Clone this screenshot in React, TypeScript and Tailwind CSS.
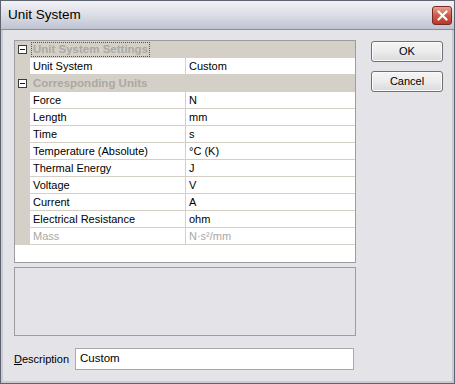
import React from "react";

type Row = { name: string; value: string; disabled?: boolean };

const settings: Row[] = [{ name: "Unit System", value: "Custom" }];

const units: Row[] = [
  { name: "Force", value: "N" },
  { name: "Length", value: "mm" },
  { name: "Time", value: "s" },
  { name: "Temperature (Absolute)", value: "°C (K)" },
  { name: "Thermal Energy", value: "J" },
  { name: "Voltage", value: "V" },
  { name: "Current", value: "A" },
  { name: "Electrical Resistance", value: "ohm" },
  { name: "Mass", value: "N·s²/mm", disabled: true },
];

function MinusBox() {
  return (
    <div className="w-[9px] h-[9px] border border-[#3c3c3c] bg-white flex items-center justify-center">
      <div className="w-[5px] h-px bg-[#1a1a1a]" />
    </div>
  );
}

function Category({ label, focused }: { label: string; focused?: boolean }) {
  return (
    <div className="flex h-[17px] bg-[#d4d0c8] items-center">
      <div className="w-[15px] flex justify-center">
        <MinusBox />
      </div>
      <span
        className={`ml-[2px] px-[1px] font-bold text-[11.5px] text-[#aaa9a2] leading-[13px] ${
          focused ? "outline-1 outline-dotted outline-[#555]" : ""
        }`}
      >
        {label}
      </span>
    </div>
  );
}

function PropRow({ row }: { row: Row }) {
  const color = row.disabled ? "text-[#a8a8a8]" : "text-black";
  return (
    <div className="flex h-[17px]">
      <div className="w-[15px] bg-[#d4d0c8]" />
      <div className={`w-[156px] border-r border-b border-[#d4d0c8] bg-white pl-[3px] leading-[16px] ${color}`}>
        {row.name}
      </div>
      <div className={`flex-1 border-b border-[#d4d0c8] bg-white pl-[3px] leading-[16px] ${color}`}>
        {row.value}
      </div>
    </div>
  );
}

function WinButton({ children }: { children: React.ReactNode }) {
  return (
    <button
      type="button"
      className="w-[72px] h-[21px] rounded-[3px] border border-[#707070] bg-gradient-to-b from-[#f4f4f4] via-[#ececec] to-[#d9d9d9] text-[11px] text-black shadow-[inset_0_0_0_1px_#fbfbfb]"
    >
      {children}
    </button>
  );
}

export default function App() {
  return (
    <div className="w-[455px] h-[384px] flex flex-col bg-[#e3e3e8] border border-[#5f6370] font-['Liberation_Sans',Arial,sans-serif] text-[11px] overflow-hidden">
      <div className="h-[29px] flex items-center justify-between pl-[7px] pr-[2px] bg-gradient-to-b from-[#f2f2f6] via-[#dcdee6] to-[#bfc3d0] border-b border-[#8a8e9c]">
        <span className="text-[13.5px] text-black">Unit System</span>
        <div className="w-[20px] h-[19px] rounded-[3px] border border-[#7a2a26] bg-gradient-to-b from-[#e8a393] via-[#cf5a46] to-[#b8382a] flex items-center justify-center">
          <svg width="11" height="11" viewBox="0 0 11 11">
            <path d="M1.5 1.5 L9.5 9.5 M9.5 1.5 L1.5 9.5" stroke="white" strokeWidth="2.2" strokeLinecap="round" />
          </svg>
        </div>
      </div>
      <div className="flex-1 flex border-x-2 border-b-2 border-[#c9cbd4] pl-[11px] pt-[10px]">
        <div className="w-[342px] flex flex-col">
          <div className="h-[223px] border border-[#9d9d9d] bg-white flex flex-col">
            <Category label="Unit System Settings" focused />
            {settings.map((r) => (
              <PropRow key={r.name} row={r} />
            ))}
            <Category label="Corresponding Units" />
            {units.map((r) => (
              <PropRow key={r.name} row={r} />
            ))}
          </div>
          <div className="h-[69px] mt-[4px] border border-[#9d9d9d] bg-[#e3e3e8]" />
          <div className="mt-[12px] flex items-center">
            <span className="w-[61px] text-black text-[11px]">
              <span className="underline">D</span>escription
            </span>
            <div className="w-[279px] h-[22px] border border-[#a9a9a9] bg-white pl-[4px] flex items-center text-black text-[11.5px]">
              Custom
            </div>
          </div>
        </div>
        <div className="ml-[15px] flex flex-col gap-[9px] pt-[1px]">
          <WinButton>OK</WinButton>
          <WinButton>Cancel</WinButton>
        </div>
      </div>
    </div>
  );
}
